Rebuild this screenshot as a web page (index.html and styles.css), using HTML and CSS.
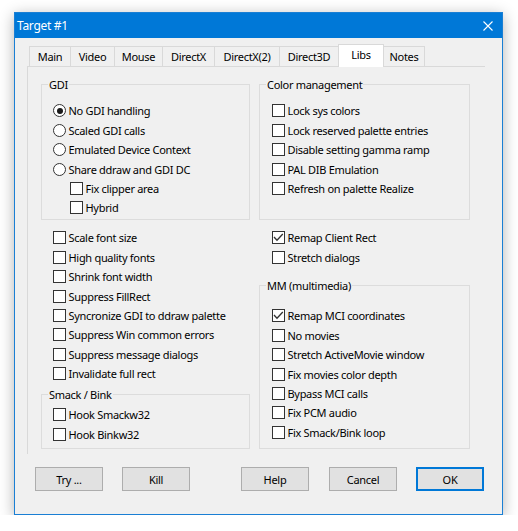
FILE: index.html
```html
<!DOCTYPE html>
<html>
<head>
<meta charset="utf-8">
<title>Target #1</title>
<link rel="stylesheet" href="styles.css">
</head>
<body>
<div class="window">
  <div class="titlebar">
    <span class="title">Target #1</span>
    <svg class="close" width="10" height="10" viewBox="0 0 10 10"><path d="M0.5 0.5 L9.5 9.5 M9.5 0.5 L0.5 9.5" stroke="#fff" stroke-width="1.1" fill="none"/></svg>
  </div>
  <div class="client">
    <div class="tabs">
      <div class="tab t-main">Main</div>
      <div class="tab t-video">Video</div>
      <div class="tab t-mouse">Mouse</div>
      <div class="tab t-dx">DirectX</div>
      <div class="tab t-dx2">DirectX(2)</div>
      <div class="tab t-d3d">Direct3D</div>
      <div class="tab t-libs selected">Libs</div>
      <div class="tab t-notes">Notes</div>
    </div>
    <div class="panel">
      <div class="col col-l">
        <div class="group gdi">
          <span class="legend">GDI</span>
          <div class="row"><span class="radio on"></span>No GDI handling</div>
          <div class="row"><span class="radio"></span>Scaled GDI calls</div>
          <div class="row"><span class="radio"></span>Emulated Device Context</div>
          <div class="row"><span class="radio"></span>Share ddraw and GDI DC</div>
          <div class="row sub"><span class="check"></span>Fix clipper area</div>
          <div class="row sub"><span class="check"></span>Hybrid</div>
        </div>
        <div class="list list-l">
          <div class="row"><span class="check"></span>Scale font size</div>
          <div class="row"><span class="check"></span>High quality fonts</div>
          <div class="row"><span class="check"></span>Shrink font width</div>
          <div class="row"><span class="check"></span>Suppress FillRect</div>
          <div class="row"><span class="check"></span>Syncronize GDI to ddraw palette</div>
          <div class="row"><span class="check"></span>Suppress Win common errors</div>
          <div class="row"><span class="check"></span>Suppress message dialogs</div>
          <div class="row"><span class="check"></span>Invalidate full rect</div>
        </div>
        <div class="group smack">
          <span class="legend">Smack / Bink</span>
          <div class="row"><span class="check"></span>Hook Smackw32</div>
          <div class="row"><span class="check"></span>Hook Binkw32</div>
        </div>
      </div>
      <div class="col col-r">
        <div class="group color">
          <span class="legend">Color management</span>
          <div class="row"><span class="check"></span>Lock sys colors</div>
          <div class="row"><span class="check"></span>Lock reserved palette entries</div>
          <div class="row"><span class="check"></span>Disable setting gamma ramp</div>
          <div class="row"><span class="check"></span>PAL DIB Emulation</div>
          <div class="row"><span class="check"></span>Refresh on palette Realize</div>
        </div>
        <div class="list list-r">
          <div class="row"><span class="check"><svg width="11" height="11" viewBox="0 0 11 11"><path d="M1 5 L4 8.3 L9.8 2" stroke="#333" stroke-width="1.3" fill="none"/></svg></span>Remap Client Rect</div>
          <div class="row"><span class="check"></span>Stretch dialogs</div>
        </div>
        <div class="group mm">
          <span class="legend">MM (multimedia)</span>
          <div class="row"><span class="check"><svg width="11" height="11" viewBox="0 0 11 11"><path d="M1 5 L4 8.3 L9.8 2" stroke="#333" stroke-width="1.3" fill="none"/></svg></span>Remap MCI coordinates</div>
          <div class="row"><span class="check"></span>No movies</div>
          <div class="row"><span class="check"></span>Stretch ActiveMovie window</div>
          <div class="row"><span class="check"></span>Fix movies color depth</div>
          <div class="row"><span class="check"></span>Bypass MCI calls</div>
          <div class="row"><span class="check"></span>Fix PCM audio</div>
          <div class="row"><span class="check"></span>Fix Smack/Bink loop</div>
        </div>
      </div>
    </div>
    <div class="buttons">
      <div class="btn">Try ...</div>
      <div class="btn b-kill">Kill</div>
      <div class="btn b-help">Help</div>
      <div class="btn b-cancel">Cancel</div>
      <div class="btn b-ok">OK</div>
    </div>
  </div>
</div>
</body>
</html>
```
FILE: styles.css
```css
html, body {
  margin: 0;
  padding: 0;
  background: #ffffff;
}
body {
  font-family: "Noto Sans", "Open Sans", sans-serif;
  font-size: 11px;
  letter-spacing: -0.3px;
  color: #000;
}
.window {
  margin: 12px 0 0 14px;
  width: 489px;
  height: 503px;
  box-sizing: border-box;
  border: 1px solid #1a7fd4;
  background: #f0f0f0;
  box-shadow: 0 3px 14px rgba(0, 0, 0, 0.3);
  display: flex;
  flex-direction: column;
}
.titlebar {
  height: 25px;
  flex: none;
  background: #0078d7;
  color: #fff;
  display: flex;
  align-items: center;
  padding-left: 2px;
  line-height: 15px;
  font-size: 12px;
}
.close {
  display: block;
  margin-left: auto;
  margin-right: 9px;
}
.client {
  padding: 6px 0 0 12px;
  display: flex;
  flex-direction: column;
}
.tabs {
  display: flex;
  align-items: flex-end;
  height: 22px;
  margin-left: 3px;
  position: relative;
  z-index: 2;
}
.tab {
  box-sizing: border-box;
  height: 20px;
  border: 1px solid #d9d9d9;
  border-bottom: none;
  margin-left: -1px;
  display: flex;
  align-items: center;
  justify-content: center;
  line-height: 15px;
  background: #f0f0f0;
  position: relative;
}
.tab.selected {
  height: 23px;
  margin-bottom: -1px;
  background: #fff;
  padding-bottom: 4px;
  z-index: 3;
}
.t-main { width: 42px; }
.t-video { width: 45px; }
.t-mouse { width: 49px; }
.t-dx { width: 53px; }
.t-dx2 { width: 66px; }
.t-d3d { width: 60px; }
.t-libs { width: 46px; }
.t-notes { width: 42px; }
.panel {
  box-sizing: border-box;
  width: 458px;
  height: 388px;
  border-top: 1px solid #d9d9d9;
  border-left: 1px solid #d9d9d9;
  padding: 17px 0 0 13px;
  display: flex;
  gap: 9px;
}
.col {
  display: flex;
  flex-direction: column;
}
.col-l { width: 209px; }
.col-r { width: 211px; }
.group {
  position: relative;
  box-sizing: border-box;
  border: 1px solid #dcdcdc;
}
.col-l .group { padding-left: 11px; }
.col-r .group { padding-left: 12px; }
.list-l { padding-left: 12px; margin-top: 8.3px; }
.list-r { padding-left: 13px; margin-top: 8.3px; }
.gdi, .color {
  height: 136px;
  padding-top: 16.3px;
}
.smack {
  margin-top: 10.5px;
  height: 55px;
  padding-top: 10.3px;
}
.mm {
  margin-top: 17.9px;
  height: 164px;
  padding-top: 20.3px;
}
.legend {
  position: absolute;
  top: -8px;
  left: 6px;
  padding: 0 1px;
  background: #f0f0f0;
  line-height: 15px;
  white-space: nowrap;
}
.row {
  display: flex;
  align-items: center;
  height: 19.4px;
  line-height: 15px;
  white-space: nowrap;
}
.row.sub { padding-left: 17px; }
.check, .radio {
  flex: none;
  box-sizing: border-box;
  width: 13px;
  height: 13px;
  border: 1px solid #333;
  background: #fff;
  margin-right: 2.5px;
  position: relative;
}
.check svg {
  display: block;
}
.radio {
  border-radius: 50%;
}
.radio.on::after {
  content: "";
  position: absolute;
  left: 2.5px;
  top: 2.5px;
  width: 6px;
  height: 6px;
  border-radius: 50%;
  background: #1a1a1a;
}
.buttons {
  display: flex;
  margin-top: 13px;
  padding-left: 8px;
}
.btn {
  box-sizing: border-box;
  width: 68px;
  height: 24px;
  border: 1px solid #adadad;
  background: #e1e1e1;
  display: flex;
  align-items: center;
  justify-content: center;
  line-height: 15px;
}
.b-kill { margin-left: 19px; }
.b-help { margin-left: 51px; }
.b-cancel { margin-left: 20px; }
.b-ok {
  margin-left: 19px;
  border: 2px solid #0078d7;
}
```
